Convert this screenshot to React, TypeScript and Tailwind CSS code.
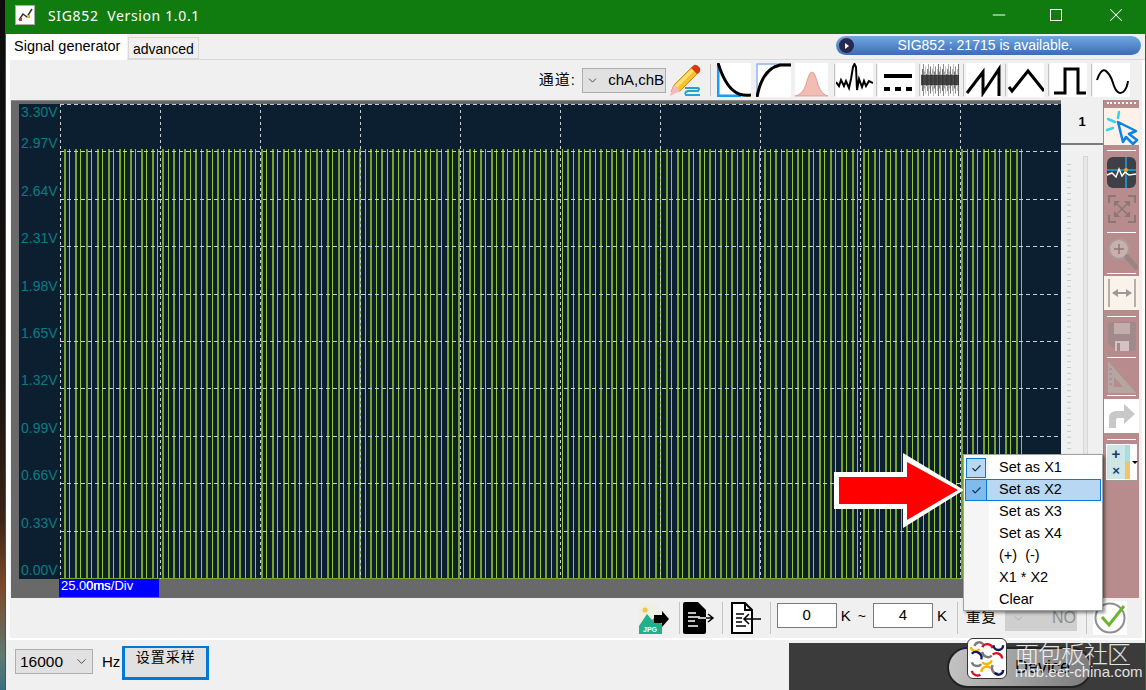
import { ChevronDown, Check, Minus, X } from 'lucide-react';

const yLabels = ['2.97V', '2.64V', '2.31V', '1.98V', '1.65V', '1.32V', '0.99V', '0.66V', '0.33V', '0.00V'];
const menuItems = ['Set as X1', 'Set as X2', 'Set as X3', 'Set as X4', '(+)  (-)', 'X1 * X2', 'Clear'];

function ScopePlot() {
  const bars = Array.from({ length: 176 }, (_, i) => i);
  return (
    <svg width="1001" height="475" className="block" shapeRendering="crispEdges">
      <rect width="1001" height="475" fill="#0c1f30" />
      {bars.map((i) => {
        const x = Math.round(4 + i * 5.47);
        return i % 2 === 0 ? (
          <rect key={i} x={x} y="45" width="2" height="429" fill="#76a32d" />
        ) : (
          <rect key={i} x={x} y="45" width="1" height="429" fill="#98c82b" />
        );
      })}
      <rect x="0" y="474" width="963" height="1" fill="#7ba62e" />
      {Array.from({ length: 10 }, (_, i) => (
        <line key={i} x1={i * 100 + 0.5} x2={i * 100 + 0.5} y1="0" y2="475" stroke="#c8cfcc" strokeDasharray="3 3" />
      ))}
      {Array.from({ length: 10 }, (_, i) => (
        <line key={i} x1="0" x2="1001" y1={Math.round(i * 47.4) + 0.5} y2={Math.round(i * 47.4) + 0.5} stroke="#c8cfcc" strokeDasharray="4 3" />
      ))}
    </svg>
  );
}

function Wave({ w = 36, children }: { w?: number; children: React.ReactNode }) {
  return (
    <svg width={w} height="34" viewBox={`0 0 ${w} 34`} className="bg-white shrink-0">
      {children}
    </svg>
  );
}

function Sep({ className = '' }: { className?: string }) {
  return <div className={`w-[1px] h-[32px] bg-[#c4c4c4] shrink-0 ${className}`} />;
}

function TopToolbar() {
  return (
    <div className="h-[40px] flex items-center justify-end pr-[12px]">
      <span className="text-[15px] tracking-[1px] mr-[6px]">通道:</span>
      <div className="w-[84px] h-[25px] bg-[#e1e1e1] border border-[#adadad] flex items-center justify-between pl-[3px] pr-[1px] text-[15px]">
        <ChevronDown size={13} strokeWidth={1.2} />
        <span>chA,chB</span>
      </div>
      <svg width="32" height="33" viewBox="0 0 32 33" className="ml-[3px] shrink-0">
        <path d="M2 28 L5 21 L23 3 L29 9 L11 27 Z" fill="#f9c02c" stroke="#d88a12" strokeWidth="1" />
        <path d="M6 21 L24 4 L26 6 L8 24 Z" fill="#fde07a" />
        <path d="M22 4 L25 1 Q28 0 31 4 Q32 7 30 9 L28 10 Z" fill="#d83a10" />
        <path d="M1 32 L2 28 L5 21 L11 27 Z" fill="#f7b9bf" />
        <path d="M16 24 H29 Q31 24 29 27 H19 Q15 28 17 31 H31" fill="none" stroke="#2aa0d2" strokeWidth="2" />
      </svg>
      <Sep className="ml-[9px]" />
      <div className="ml-[6px]">
        <Wave w={34}>
          <path d="M1 1 V33 H24" fill="none" stroke="#14a0ee" strokeWidth="3" />
          <path d="M1 0 Q9 26 22 31 Q28 33 34 32" fill="none" stroke="#000" strokeWidth="3" />
        </Wave>
      </div>
      <div className="ml-[5px]">
        <Wave w={35}>
          <path d="M1 32 V1 H35" fill="none" stroke="#90b4e4" strokeWidth="1.5" />
          <path d="M1 34 Q6 6 24 2 H35" fill="none" stroke="#000" strokeWidth="3" />
        </Wave>
      </div>
      <div className="ml-[4px]">
        <Wave w={33}>
          <path d="M0 33 Q7 32 11 22 Q14 9 17 9 Q20 9 23 22 Q27 32 33 33 Z" fill="#f2bdb4" stroke="#e49a8c" strokeWidth="1" />
        </Wave>
      </div>
      <Sep className="ml-[6px]" />
      <div className="ml-[1px]">
        <Wave w={37}>
          <path d="M0 19 L3 23 L5 17 L8 23 L10 18 L13 25 L15 16 L17 4 L18.500 1 L20 4 L21 27 L23 16 L26 24 L28 18 L30 23 L33 18 L37 20" fill="none" stroke="#000" strokeWidth="2" />
        </Wave>
      </div>
      <Sep className="ml-[3px]" />
      <div className="ml-[1px]">
        <Wave w={37}>
          <rect x="6" y="11" width="28" height="4" fill="#000" />
          <rect x="6" y="24" width="6" height="4" fill="#000" />
          <rect x="17" y="24" width="6" height="4" fill="#000" />
          <rect x="28" y="24" width="6" height="4" fill="#000" />
        </Wave>
      </div>
      <Sep className="ml-[4px]" />
      <div className="ml-[1px]">
        <Wave w={38}>
          <g className="blur-[0.6px]">
            {Array.from({ length: 38 }, (_, i) => {
              const h = 6 + ((i * 7) % 5) * 2.500;
              return <line key={i} x1={i + 0.5} x2={i + 0.5} y1={17 - h} y2={17 + h} stroke="#000" strokeOpacity={0.25 + ((i * 3) % 4) * 0.1} />;
            })}
            <rect x="0" y="12" width="38" height="10" fill="#222" fillOpacity="0.75" />
          </g>
        </Wave>
      </div>
      <Sep className="ml-[4px]" />
      <div className="ml-[2px]">
        <Wave w={35}>
          <path d="M1 30 L17 9 V30 L33 6 V33" fill="none" stroke="#000" strokeWidth="3" />
        </Wave>
      </div>
      <Sep className="ml-[4px]" />
      <div className="ml-[2px]">
        <Wave w={36}>
          <path d="M1 24 L4 28 L20 8 L36 28" fill="none" stroke="#000" strokeWidth="3" />
        </Wave>
      </div>
      <Sep className="ml-[4px]" />
      <div className="ml-[1px]">
        <Wave w={37}>
          <path d="M4 30 H15 V6 H28 V30 H36" fill="none" stroke="#000" strokeWidth="3" />
        </Wave>
      </div>
      <Sep className="ml-[4px]" />
      <div className="ml-[1px]">
        <Wave w={37}>
          <path d="M4 17 Q9 3 14 9 Q18 13 20 20 Q24 33 30 29 Q34 26 35 18" fill="none" stroke="#000" strokeWidth="2" />
        </Wave>
      </div>
    </div>
  );
}

function ChartPanel() {
  return (
    <div className="w-[1050px] h-[498px] bg-[#696969] border-t border-[#8c8c8c] pt-[3px] shrink-0">
      <div className="flex h-[475px]">
        <div className="w-[8px]" />
        <div className="w-[41px] bg-[#0c1f30] text-[14px] text-[#0b7c82] pl-[2px]">
          <div className="h-[47.400px] flex flex-col justify-between leading-[16px]">
            <span>3.30V</span>
            <span>{yLabels[0]}</span>
          </div>
          {yLabels.slice(1).map((l) => (
            <div key={l} className="h-[47.400px] flex items-end leading-[16px]">
              {l}
            </div>
          ))}
        </div>
        <ScopePlot />
      </div>
      <div className="ml-[48px] w-[100px] h-[18px] bg-[#0000ff] relative text-white text-[13px] leading-[14px]">
        <span className="absolute left-[2px] top-0">25.00ms/Div</span>
        <span className="absolute left-[27px] top-0">0ms</span>
      </div>
    </div>
  );
}

function SliderColumn() {
  return (
    <div className="w-[43px] shrink-0 flex flex-col border-r border-[#8a8a8a]">
      <div className="h-[45px] flex items-center justify-center border-b-2 border-[#7a7a7a] text-[13px] font-bold">1</div>
      <div className="flex-1 flex pl-[6px] pt-[11px] gap-[12px]">
        <svg width="4" height="340" className="mt-[8px]">
          {Array.from({ length: 58 }, (_, i) => (
            <rect key={i} x="0" y={i * 5.800} width="4" height="1" fill="#c9c9c9" />
          ))}
        </svg>
        <div className="w-[5px] h-[441px] bg-[#e7e7e7] border border-[#d6d6d6]" />
      </div>
    </div>
  );
}

function ToolSep({ className = '' }: { className?: string }) {
  return <div className={`h-[1px] mx-[3px] bg-white ${className}`} />;
}

function ToolColumn() {
  return (
    <div className="w-[35px] shrink-0 bg-[#b88c8c] flex flex-col">
      <div className="h-[8px] mx-[3px] border-t-2 border-dotted border-white mt-[2px] mb-[-2px]" />
      <div className="h-[37px] bg-[#fdf2ea] flex items-center justify-center">
        <svg width="34" height="36" viewBox="0 0 34 36">
          <path d="M13 13 L31 22 L24 25 L32 31 L28 35 L21 28 L18 33 Z" fill="none" stroke="#0a84e2" strokeWidth="2.500" strokeLinejoin="round" />
          <path d="M3 10 L10 13 M14 3 L13 9 M2 21 L8 19" stroke="#36d2e6" strokeWidth="2.500" strokeLinecap="round" />
        </svg>
      </div>
      <ToolSep className="mt-[5px]" />
      <div className="mt-[4px] flex justify-center">
        <svg width="31" height="35" viewBox="0 0 31 35">
          <rect x="1" y="2" width="29" height="31" rx="6" fill="#3f3f46" />
          <path d="M1 15 H30" stroke="#18a8e6" strokeWidth="1.500" />
          <path d="M20 2 V33" stroke="#18a8e6" strokeWidth="1.500" />
          <path d="M1 20 L6 18 L10 22 L13 14 L16 21 L19 17 L23 20 L30 19" fill="none" stroke="#fff" strokeWidth="1.500" />
          <circle cx="20" cy="15" r="2" fill="#f4a21c" />
        </svg>
      </div>
      <div className="mt-[5px] flex justify-center">
        <svg width="28" height="28" viewBox="0 0 28 28" fill="none" stroke="#8a7874" strokeWidth="2">
          <path d="M1 8 V1 H8 M20 1 H27 V8 M27 20 V27 H20 M8 27 H1 V20" />
          <path d="M8 8 L20 20 M20 8 L8 20" strokeWidth="1.500" />
          <path d="M6 12 V6 H12 Z M16 6 H22 V12 Z M22 16 V22 H16 Z M12 22 H6 V16 Z" fill="#8a7874" stroke="none" />
        </svg>
      </div>
      <ToolSep className="mt-[9px]" />
      <div className="mt-[3px] flex justify-center">
        <svg width="32" height="34" viewBox="0 0 32 34">
          <circle cx="13" cy="13" r="10" fill="#c8b0ac" stroke="#a99" strokeWidth="2" />
          <path d="M8 13 H18 M13 8 V18" stroke="#8d7878" strokeWidth="1.500" />
          <path d="M21 21 L30 31" stroke="#9a8484" strokeWidth="5" strokeLinecap="round" />
        </svg>
      </div>
      <ToolSep className="mt-[3px]" />
      <div className="mt-[2px] h-[34px] bg-[#fdf2ea] flex items-center justify-center">
        <svg width="28" height="30" viewBox="0 0 28 30" fill="none" stroke="#9a9a9a" strokeWidth="1.500">
          <path d="M1 1 V29 M27 1 V29" />
          <path d="M5 15 H23" strokeWidth="2" />
          <path d="M4 15 L10 11 V19 Z M24 15 L18 11 V19 Z" fill="#9a9a9a" stroke="none" />
        </svg>
      </div>
      <ToolSep className="mt-[6px]" />
      <div className="mt-[5px] flex justify-center">
        <svg width="28" height="29" viewBox="0 0 28 29">
          <path d="M2 0 H26 Q28 0 28 2 V27 Q28 29 26 29 H8 L0 21 V2 Q0 0 2 0 Z" fill="#a08a8a" />
          <rect x="6" y="1" width="16" height="11" fill="#c4acac" />
          <rect x="7" y="19" width="14" height="10" fill="#d4c2c2" />
          <rect x="9" y="21" width="3" height="8" fill="#a08a8a" />
        </svg>
      </div>
      <ToolSep className="mt-[6px]" />
      <div className="mt-[2px] flex justify-center">
        <svg width="30" height="34" viewBox="0 0 30 34">
          <path d="M1 1 L29 33 H1 Z M7 17 V27 H16 Z" fill="#b5a5a3" fillRule="evenodd" />
          <path d="M2 9 H5 M2 14 H5 M2 19 H5 M2 24 H5" stroke="#98888a" />
        </svg>
      </div>
      <ToolSep className="mt-[1px]" />
      <div className="mt-[3px] h-[34px] bg-white flex items-center justify-center">
        <svg width="28" height="26" viewBox="0 0 28 26">
          <path d="M1 25 V15 Q1 8 9 8 H16 V1 L27 11 L16 21 V15 H10 Q8 15 8 18 V25 Z" fill="#c8c8c8" />
        </svg>
      </div>
      <ToolSep className="mt-[6px]" />
      <div className="mt-[3px] h-[38px] bg-white border border-[#9a9a9a] mx-[1px] flex items-center">
        <div className="grid grid-cols-[18px_5px] grid-rows-2 h-[34px] ml-[1px]">
          <div className="bg-[#cfe6e6] flex items-center justify-center text-[#1c3b70] text-[15px] font-bold leading-none">+</div>
          <div className="bg-[#a7dedf]" />
          <div className="bg-[#cfe6e6] flex items-center justify-center text-[#1c3b70] text-[13px] font-bold leading-none">×</div>
          <div className="bg-[#f7c06a]" />
        </div>
        <div className="ml-[2px] w-0 h-0 border-x-[3px] border-x-transparent border-t-[3px] border-t-black" />
      </div>
    </div>
  );
}

function BottomToolbar() {
  return (
    <div className="h-[40px] flex items-center justify-end pr-[15px]">
      <svg width="32" height="32" viewBox="0 0 32 32" className="shrink-0">
        <path d="M1 1 H17 L24 8 V30 H1 Z" fill="#efefe4" />
        <circle cx="7" cy="8" r="2.500" fill="#f2c53c" />
        <path d="M1 24 L9 12 L14 18 L18 14 L24 22 V32 H1 Z" fill="#20b08c" />
        <path d="M16 13 H24 V9 L31 17 L24 25 V21 H16 Z" fill="#000" />
        <text x="5" y="30" fontSize="7" fill="#fff" fontWeight="700">JPG</text>
      </svg>
      <Sep className="ml-[9px]" />
      <svg width="32" height="32" viewBox="0 0 32 32" className="ml-[3px] shrink-0">
        <path d="M2 0 H15 L23 8 V30 Q23 32 21 32 H2 Q0 32 0 30 V2 Q0 0 2 0 Z" fill="#000" />
        <path d="M5 11 H13 M5 15 H17 M5 19 H12 M5 24 H15" stroke="#fff" strokeWidth="1.500" />
        <path d="M15 16 H29 M25 12 L30 16 L25 20" fill="none" stroke="#000" strokeWidth="1.500" />
        <path d="M15 16 H23" stroke="#fff" strokeWidth="1.500" />
      </svg>
      <Sep className="ml-[7px]" />
      <svg width="32" height="32" viewBox="0 0 32 32" className="ml-[7px] shrink-0">
        <path d="M2 1 H15 L22 8 V31 H2 Z M15 1 V8 H22" fill="#fff" stroke="#000" strokeWidth="2" />
        <path d="M6 12 H14 M6 16 H12 M6 20 H12 M6 24 H16" stroke="#000" strokeWidth="1.500" />
        <path d="M31 17 H14 M19 12 L14 17 L19 22" fill="none" stroke="#000" strokeWidth="1.500" />
      </svg>
      <Sep className="ml-[8px]" />
      <div className="ml-[6px] w-[60px] h-[25px] bg-white border border-[#7a7a7a] flex items-center justify-center text-[15px] mb-[6px]">0</div>
      <span className="ml-[4px] text-[15px] tracking-[7px] mb-[4px]">K</span>
      <span className="text-[14px] mr-[7px] mb-[4px]">~</span>
      <div className="w-[60px] h-[25px] bg-white border border-[#7a7a7a] flex items-center justify-center text-[15px] mb-[6px]">4</div>
      <span className="ml-[4px] text-[15px] mb-[4px]">K</span>
      <Sep className="ml-[10px]" />
      <span className="ml-[8px] text-[14.500px] tracking-[1px]">重复</span>
      <div className="ml-[8px] w-[72px] h-[25px] bg-[#cfcfcf] flex items-center justify-between pl-[3px] pr-[1px] text-[16px] text-[#8e8e8e]">
        <ChevronDown size={13} strokeWidth={1} className="ml-[4px]" />
        <span>NO</span>
      </div>
      <Sep className="ml-[9px]" />
      <svg width="34" height="34" viewBox="0 0 34 34" className="ml-[6px] bg-white shrink-0">
        <circle cx="17" cy="17" r="14.500" fill="none" stroke="#8e8e8e" strokeWidth="2" />
        <path d="M9 16 L16 24 L31 5" fill="none" stroke="#6ab52a" strokeWidth="3" />
      </svg>
    </div>
  );
}

function ContextMenu() {
  return (
    <div className="absolute left-[963px] top-[454px] w-[140px] h-[157px] bg-white border border-[#a0a0a0] shadow-[2px_2px_3px_rgba(0,0,0,0.45)] pt-[2px] text-[14.500px] z-10">
      <div className="absolute left-0 top-0 bottom-0 w-[25px] bg-[#f5f5f5]" />
      {menuItems.map((m, i) => (
        <div key={m} className={`relative h-[22px] flex items-center whitespace-pre ${i === 1 ? 'bg-[#b8d7f2] border border-[#0a78d7] mx-[1px] pl-[33px]' : 'pl-[35px]'}`}>
          {i === 0 && (
            <div className="absolute left-[2px] top-[1px] w-[20px] h-[20px] bg-[#b8d7f2] border border-[#0a78d7] flex items-center justify-center">
              <Check size={11} strokeWidth={2.500} color="#1f2b45" />
            </div>
          )}
          {i === 1 && (
            <div className="absolute left-0 top-0 bottom-0 w-[21px] bg-[#7fbbed] border-r border-[#0a78d7] flex items-center justify-center">
              <Check size={11} strokeWidth={2.500} color="#1f2b45" />
            </div>
          )}
          {m}
        </div>
      ))}
    </div>
  );
}

function Watermark() {
  const arcs = [
    ['M3 8 A5 5 0 0 0 12 10', '#f4b400'],
    ['M7 7 A5 5 0 0 1 16 5', '#7a7a7a'],
    ['M15 8 A6 6 0 0 1 26 9', '#d8101c'],
    ['M27 6 A5 5 0 0 0 37 6', '#14185c'],
    ['M4 15 A6 6 0 0 1 14 21', '#14185c'],
    ['M15 13 A6 6 0 0 0 25 17', '#7a7a7a'],
    ['M15 24 A6 6 0 0 0 25 22', '#f4b400'],
    ['M26 16 A6 6 0 0 1 36 20', '#d8101c'],
    ['M4 24 A6 6 0 0 0 14 26', '#7a7a7a'],
    ['M4 33 A6 6 0 0 0 13 37', '#d8101c'],
    ['M14 34 A6 6 0 0 1 24 30', '#f4b400'],
    ['M26 27 A6 6 0 0 0 32 36', '#7a7a7a'],
    ['M28 35 A5 5 0 0 0 37 32', '#14185c'],
  ];
  return (
    <div className="absolute left-[967px] top-[638px] flex z-20 pointer-events-none">
      <svg width="40" height="41" viewBox="0 0 40 40" className="bg-white rounded-[6px] border border-[#333]">
        {arcs.map(([d, c]) => (
          <path key={d} d={d} fill="none" stroke={c} strokeWidth="2.500" />
        ))}
      </svg>
      <div className="ml-[8px] text-white/85">
        <div className="text-[24px] leading-[30px] tracking-[-1px] whitespace-nowrap font-[family-name:'Noto_Sans_CJK_SC',sans-serif] font-light">面包板社区</div>
        <div className="text-[15px] leading-[16px] mt-[-4px]">mbb.eet-china.com</div>
      </div>
    </div>
  );
}

function Footer() {
  return (
    <div className="flex-1 flex bg-[#f0f0f0] relative">
      <div className="flex items-start text-[14px] pl-[9px] pt-[6px]">
        <div className="w-[78px] h-[25px] mt-[3px] bg-[#e1e1e1] border border-[#adadad] flex items-center justify-between pl-[4px] pr-[3px] text-[15.500px]">
          16000
          <ChevronDown size={15} strokeWidth={1} />
        </div>
        <span className="ml-[9px] mt-[6px] text-[15px] leading-[20px]">Hz</span>
        <div className="ml-[2px] w-[87px] h-[34px] bg-[#e1e1e1] border-[3px] border-[#0078d7] border-t-[2px] text-[14px] text-center tracking-[1px] leading-[16px] pt-[1px]">设置采样</div>
      </div>
      <div className="ml-auto w-[356px] h-[47px] mt-[3px] bg-[#3b3b3b] pl-[158px] pt-[4px]">
        <div className="w-[145px] h-[41px] rounded-full border-2 border-[#222] bg-[linear-gradient(100deg,#c4c4c4,#7a7a7a)] flex items-center pl-[66px] text-[18px] text-black">Device</div>
      </div>
    </div>
  );
}

export default function App() {
  return (
    <div className="relative w-[1146px] h-[690px] overflow-hidden flex text-black font-[family-name:'Liberation_Sans','Noto_Sans_CJK_SC',sans-serif]">
      <div className="w-[5px] shrink-0 bg-[linear-gradient(180deg,#0d0d0d_0%,#171310_55%,#3a2416_75%,#7d4a2a_85%,#5f7a6f_95%,#3a6f80_100%)]" />
      <div className="flex-1 flex flex-col border-x border-[#107c10] bg-white min-w-0">
        <div className="h-[34px] bg-[#107c10] shrink-0 flex items-center text-white">
          <svg width="20" height="20" viewBox="0 0 20 20" className="ml-[9px] mb-[5px] bg-white">
            <rect x="0.500" y="0.500" width="19" height="19" fill="none" stroke="#555" strokeDasharray="1 1" />
            <path d="M4 15 L8 9 L12 12 L17 4" fill="none" stroke="#333" strokeWidth="1.500" />
            <rect x="4" y="13" width="3" height="3" fill="#c83a2a" />
            <rect x="12" y="10" width="3" height="3" fill="#f4b400" />
          </svg>
          <span className="ml-[13px] mb-[4px] text-[14px] tracking-[0.650px] whitespace-pre font-[family-name:'Noto_Sans',sans-serif]">SIG852  Version 1.0.1</span>
          <Minus size={20} strokeWidth={1.2} className="ml-auto mr-[41px] mb-[5px]" />
          <div className="w-[12px] h-[12px] border border-white mr-[43px] mb-[5px]" />
          <X size={22} strokeWidth={1.100} className="mr-[18px] mb-[5px]" />
        </div>
        <div className="h-[26px] shrink-0 bg-[#f0f0f0] flex border-b border-[#d9d9d9] relative">
          <div className="w-[121px] h-[26px] bg-white text-[14.500px] leading-[24px] pl-[8px]">Signal generator</div>
          <div className="w-[71px] h-[22px] mt-[3px] border border-[#d9d9d9] text-[14px] leading-[22px] pl-[4px] ml-[1px]">advanced</div>
          <div className="absolute left-[830px] top-[2px] w-[305px] h-[19px] rounded-full bg-[linear-gradient(180deg,#72a8e2,#3c6cb4)] flex items-center text-white text-[14px]">
            <div className="w-[15px] h-[15px] ml-[3px] rounded-full bg-[#2a284e] flex items-center justify-center">
              <div className="w-0 h-0 border-y-[3px] border-y-transparent border-l-[4px] border-l-white" />
            </div>
            <span className="flex-1 text-center pr-[25px]">SIG852 : 21715 is available.</span>
          </div>
        </div>
        <div className="shrink-0 pl-[4px] pr-[3px] pb-[2px]">
          <div className="bg-[#f0f0f0] h-[578px] flex flex-col">
            <TopToolbar />
            <div className="flex h-[498px] pl-[1px]">
              <ChartPanel />
              <SliderColumn />
              <ToolColumn />
            </div>
            <BottomToolbar />
          </div>
        </div>
        <Footer />
      </div>
      <svg width="131" height="76" className="absolute left-[834px] top-[453px] z-[5]">
        <polygon points="0,19 69,19 69,0 130,37 69,75 69,56 0,56" fill="#fff" />
        <polygon points="5,24 73,24 73,9 124,37 73,67 73,51 5,51" fill="#ff0000" />
      </svg>
      <ContextMenu />
      <Watermark />
    </div>
  );
}
